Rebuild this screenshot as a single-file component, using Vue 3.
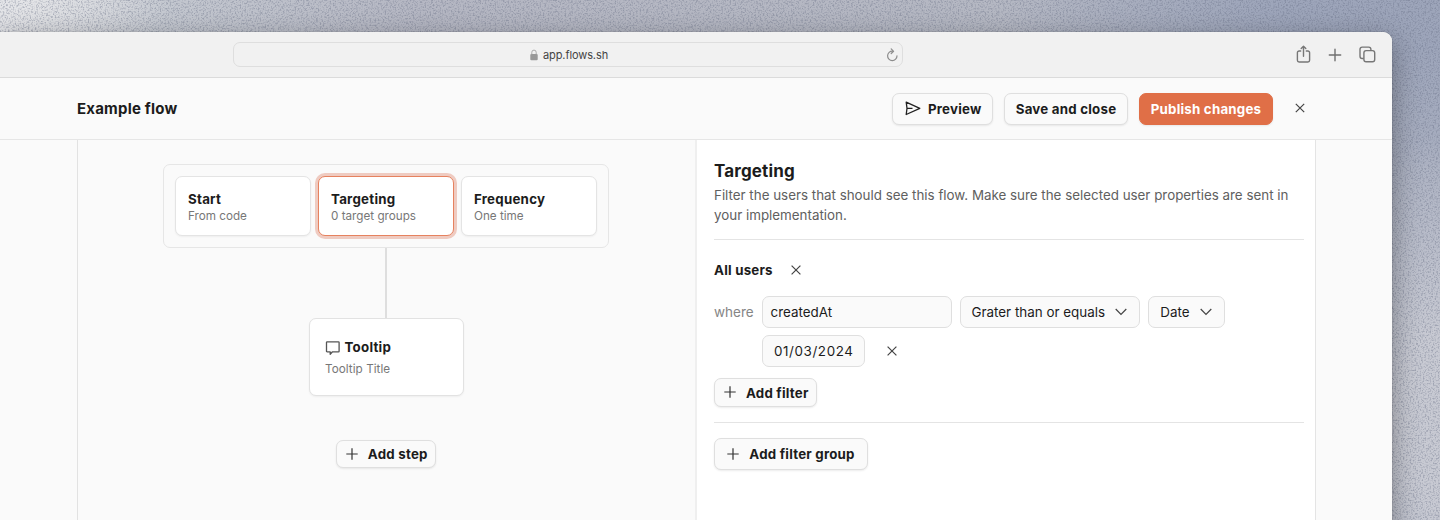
<script setup>
const setup = [
  { title: 'Start', note: 'From code' },
  { title: 'Targeting', note: '0 target groups', active: true },
  { title: 'Frequency', note: 'One time' },
]
</script>

<template>
  <div class="desktop">
    <svg class="grain" width="1440" height="520" aria-hidden="true">
      <filter id="grain" x="0" y="0" width="100%" height="100%" color-interpolation-filters="sRGB">
        <feTurbulence type="fractalNoise" baseFrequency="0.6" numOctaves="2" seed="4" />
        <feColorMatrix values="0 0 0 0 0.38  0 0 0 0 0.41  0 0 0 0 0.5  3.2 0 0 0 -1.45" />
      </filter>
      <rect width="1440" height="520" filter="url(#grain)" />
    </svg>
    <div class="window">
      <div class="toolbar">
        <div class="address">
          <svg class="lock" width="8" height="12" viewBox="0 0 8 12">
            <rect x="0.3" y="5" width="7.4" height="6.2" rx="1" fill="#999" />
            <path d="M1.8 5.3V3.3a2.2 2.2 0 0 1 4.4 0v2" fill="none" stroke="#aaa" stroke-width="1" />
          </svg>
          <span class="url">app.flows.sh</span>
          <svg class="reload" width="12" height="14" viewBox="0 0 12 14" fill="none" stroke="#8c8c8c" stroke-width="1.2" stroke-linecap="round" stroke-linejoin="round">
            <path d="M6.6 3.2A4.7 4.7 0 1 0 11 7.8" />
            <path d="M5.200.9l2.400 2.400L5.200 5.500" />
          </svg>
        </div>
        <div class="tools">
          <svg width="16" height="20" viewBox="0 0 16 20" fill="none" stroke="#777" stroke-width="1.4" stroke-linecap="round" stroke-linejoin="round">
            <path d="M5.700 6H4.100a1.700 1.700 0 0 0-1.700 1.700v7.600a1.700 1.700 0 0 0 1.700 1.700h8.800a1.700 1.700 0 0 0 1.700-1.700V7.700a1.700 1.700 0 0 0-1.700-1.700h-1.600" />
            <path d="M8.500 11.200V1.200M6.200 3.500l2.300-2.300 2.300 2.300" />
          </svg>
          <svg width="14" height="14" viewBox="0 0 14 14" fill="none" stroke="#707070" stroke-width="1.4" stroke-linecap="round">
            <path d="M7 1.300v11.400M1.300 7h11.400" />
          </svg>
          <svg width="18" height="18" viewBox="0 0 18 18" fill="none" stroke="#777" stroke-width="1.400" stroke-linejoin="round">
            <rect x="5.900" y="4.600" width="10.800" height="11.200" rx="2.200" />
            <path d="M5.700 12.500H4.200a2.200 2.200 0 0 1-2.200-2.200V3.300a2.200 2.200 0 0 1 2.200-2.200h6.500a2.200 2.200 0 0 1 2.200 2.200V4.500" />
          </svg>
        </div>
      </div>

      <header class="header">
        <h1>Example flow</h1>
        <div class="actions">
          <button class="btn preview">
            <svg width="16" height="16" viewBox="0 0 16 16" fill="none" stroke="#222" stroke-width="1.300" stroke-linejoin="round">
              <path d="M1.200 1.200L14.800 7.300 1.200 13.500 2 7.300z M2 7.300H7.500" />
            </svg>
            <span>Preview</span>
          </button>
          <button class="btn save">Save and close</button>
          <button class="btn publish">Publish changes</button>
          <svg class="close" width="10" height="10" viewBox="0 0 10 10"><path d="M.8.8l8.400 8.400M9.200.8L.8 9.200" /></svg>
        </div>
      </header>

      <div class="workspace">
        <section class="canvas">
          <div class="group">
            <div v-for="s in setup" :key="s.title" class="card" :class="{ active: s.active }">
              <div class="card-title">{{ s.title }}</div>
              <div class="card-note">{{ s.note }}</div>
            </div>
          </div>
          <div class="connector"></div>
          <div class="step">
            <div class="step-head">
              <svg width="15" height="14" viewBox="0 0 15 14" fill="none" stroke="#555" stroke-width="1.300" stroke-linejoin="round">
                <path d="M2.100.8h11.400q.6 0 .6.600v8.800q0 .6-.6.600H7.500L5.200 13.300v-2.500H2.100q-.6 0-.6-.6V1.400q0-.6.600-.6z" />
              </svg>
              <span class="card-title">Tooltip</span>
            </div>
            <div class="card-note">Tooltip Title</div>
          </div>
          <button class="btn add-step">
            <svg class="plus" width="12" height="12" viewBox="0 0 12 12"><path d="M6 .3v11.400M.3 6h11.400" /></svg>
            <span>Add step</span>
          </button>
        </section>

        <section class="panel">
          <h2>Targeting</h2>
          <p class="intro">Filter the users that should see this flow. Make sure the selected user properties are sent in<br />your implementation.</p>
          <hr />
          <div class="group-head">
            <span>All users</span>
            <svg class="close" width="10" height="10" viewBox="0 0 10 10"><path d="M.6.6l8.800 8.800M9.400.6L.6 9.400" /></svg>
          </div>
          <div class="filter">
            <span class="where">where</span>
            <div class="fields">
              <div class="field name">createdAt</div>
              <div class="field operator">
                <span>Grater than or equals</span>
                <svg class="chevron" width="12" height="8" viewBox="0 0 12 8"><path d="M.7 1l5.300 5.400L11.300 1" /></svg>
              </div>
              <div class="field type">
                <span>Date</span>
                <svg class="chevron" width="12" height="8" viewBox="0 0 12 8"><path d="M.7 1l5.300 5.400L11.300 1" /></svg>
              </div>
              <div class="field date">01/03/2024</div>
              <svg class="close remove" width="10" height="10" viewBox="0 0 10 10"><path d="M.6.6l8.800 8.800M9.400.6L.6 9.400" /></svg>
            </div>
          </div>
          <button class="btn add-filter">
            <svg class="plus" width="12" height="12" viewBox="0 0 12 12"><path d="M6 .3v11.400M.3 6h11.400" /></svg>
            <span>Add filter</span>
          </button>
          <hr />
          <button class="btn add-group">
            <svg class="plus" width="12" height="12" viewBox="0 0 12 12"><path d="M6 .3v11.400M.3 6h11.400" /></svg>
            <span>Add filter group</span>
          </button>
        </section>
      </div>
    </div>
  </div>
</template>

<style>
body {
  overflow: hidden;
}
</style>

<style scoped>
* {
  box-sizing: border-box;
}
.desktop {
  position: relative;
  width: 1440px;
  height: 520px;
  padding: 32px 48px 0 0;
  overflow: hidden;
  font-family: Inter, 'Liberation Sans', sans-serif;
  color: #1c1c1c;
  background:
    radial-gradient(ellipse 170px 80px at 0 0, #e3e4e7 15%, transparent),
    radial-gradient(ellipse 150px 280px at 1440px 420px, #c8cad3 30%, transparent),
    radial-gradient(ellipse 400px 170px at 1400px 0, #9da5ba 30%, transparent),
    linear-gradient(90deg, #d2d4d9 0, #c4c8d0 160px, #b5b7c3 420px, #b5b8c3 1000px, #a9afc0 1440px);
}
.grain {
  position: absolute;
  inset: 0;
  opacity: 0.38;
}
.window {
  position: relative;
  height: 520px;
  background: #fafafa;
  border-radius: 0 9px 0 0;
  box-shadow: 0 0 1px rgba(0, 0, 0, 0.55), 0 8px 28px rgba(0, 0, 0, 0.36);
}
.toolbar {
  display: flex;
  align-items: center;
  height: 46px;
  padding-left: 233px;
  background: #f1f1f1;
  border-bottom: 1px solid #dbdbdb;
  border-radius: 0 9px 0 0;
}
.address {
  display: flex;
  align-items: center;
  width: 670px;
  height: 25px;
  padding: 0 4px 0 296px;
  border: 1px solid #dedede;
  border-radius: 7px;
}
.url {
  margin-left: 5px;
  font-size: 11px;
  letter-spacing: -0.1px;
  color: #444;
}
.reload {
  margin-left: auto;
}
.tools {
  display: flex;
  align-items: center;
  width: 81px;
  margin-left: 392px;
  justify-content: space-between;
}
.header {
  display: flex;
  align-items: center;
  justify-content: space-between;
  height: 62px;
  padding: 0 87px 0 77px;
  border-bottom: 1px solid #e6e6e6;
}
h1 {
  margin: 0;
  font-size: 15px;
  font-weight: 700;
  letter-spacing: 0.2px;
}
.actions {
  display: flex;
  align-items: center;
  gap: 11px;
}
.btn {
  display: flex;
  align-items: center;
  justify-content: center;
  padding: 0;
  font: 700 13.300px Inter, 'Liberation Sans', sans-serif;
  letter-spacing: 0.22px;
  color: #1c1c1c;
  background: #fafafa;
  border: 1px solid #dfdfdf;
  border-radius: 7px;
  box-shadow: 0 1px 2px rgba(0, 0, 0, 0.08);
  white-space: nowrap;
}
.actions .btn {
  height: 32px;
}
.preview {
  width: 101px;
  padding-left: 1.5px;
  gap: 7px;
}
.save {
  width: 124px;
}
.actions .publish {
  width: 134px;
  color: #fff;
  background: #e06f47;
  border-color: #e06f47;
}
.close path {
  fill: none;
  stroke: #444;
  stroke-width: 1.200;
}
.actions .close {
  margin: 0 0 1px 11px;
}
.workspace {
  display: grid;
  grid-template-columns: 617px 621px;
  width: 1239px;
  height: 380px;
  margin-left: 77px;
  border-left: 1px solid #e2e2e2;
}
.canvas {
  display: flex;
  flex-direction: column;
  align-items: center;
  padding: 24px 1px 0 0;
}
.group {
  display: flex;
  gap: 7px;
  width: 446px;
  height: 84px;
  padding: 11px 10.600px 11px 11.400px;
  border: 1px solid #e6e6e6;
  border-radius: 7px;
}
.card {
  flex: 1;
  padding: 14px 11.600px;
  background: #fff;
  border: 1px solid #e4e4e4;
  border-radius: 7px;
  box-shadow: 0 1px 2px rgba(0, 0, 0, 0.05);
}
.active {
  border-color: #e6825f;
  box-shadow: 0 0 0 3px #efcbc1;
}
.card-title {
  font-size: 13.300px;
  line-height: 17px;
  font-weight: 700;
  letter-spacing: 0.25px;
}
.card-note {
  font-size: 11.700px;
  line-height: 16px;
  color: #777;
}
.connector {
  width: 2px;
  height: 70px;
  background: #dedede;
}
.step {
  width: 155px;
  height: 78px;
  padding: 20px 15px;
  background: #fff;
  border: 1px solid #e2e2e2;
  border-radius: 7px;
  box-shadow: 0 1px 2px rgba(0, 0, 0, 0.05);
}
.step .card-note {
  padding-left: 0.5px;
  letter-spacing: 0.05px;
}
.step-head {
  display: flex;
  align-items: center;
  gap: 5px;
  margin-bottom: 5px;
}
.plus {
  margin-bottom: 1px;
}
.plus path {
  fill: none;
  stroke: #333;
  stroke-width: 1.200;
}
.add-step {
  width: 100px;
  height: 28px;
  padding-left: 1.5px;
  margin-top: 44px;
  gap: 10px;
}
.panel {
  padding: 20px 11px 0 17px;
  background: #fff;
  border-left: 2px solid #efefef;
  border-right: 1px solid #e4e4e4;
}
h2 {
  margin: 0;
  font-size: 17px;
  line-height: 23px;
  font-weight: 700;
  letter-spacing: 0.15px;
}
.intro {
  margin: 2px 0 14px;
  font-size: 13.370px;
  line-height: 20px;
  color: #606060;
  white-space: nowrap;
}
hr {
  height: 1px;
  margin: 0;
  border: 0;
  background: #e4e4e4;
}
.group-head {
  display: flex;
  align-items: center;
  gap: 18.500px;
  height: 30px;
  margin: 15px 0 11px;
  font-size: 13.300px;
  font-weight: 700;
  letter-spacing: 0.22px;
}
.filter {
  display: flex;
  gap: 8px;
}
.where {
  width: 40px;
  font-size: 13.500px;
  line-height: 32px;
  color: #858585;
}
.fields {
  display: flex;
  flex-wrap: wrap;
  align-items: center;
  gap: 7px 8px;
  flex: 1;
}
.field {
  display: flex;
  align-items: center;
  height: 32px;
  padding: 0 12px 0 11px;
  font-size: 13.400px;
  background: #fafafa;
  border: 1px solid #dfdfdf;
  border-radius: 7px;
  white-space: nowrap;
}
.name {
  width: 189.500px;
  padding: 0 7.500px;
}
.operator {
  width: 180.800px;
  justify-content: space-between;
}
.type {
  width: 77px;
  margin-right: 60px;
  justify-content: space-between;
}
.date {
  width: 103px;
  letter-spacing: 0.6px;
}
.remove {
  margin-left: 14px;
}
.chevron path {
  fill: none;
  stroke: #444;
  stroke-width: 1.200;
}
.add-filter {
  width: 103px;
  height: 29px;
  padding-left: 1.5px;
  margin: 11px 0 15px;
  gap: 10px;
}
.add-group {
  width: 154px;
  height: 32px;
  margin-top: 15px;
  gap: 10px;
}
</style>
